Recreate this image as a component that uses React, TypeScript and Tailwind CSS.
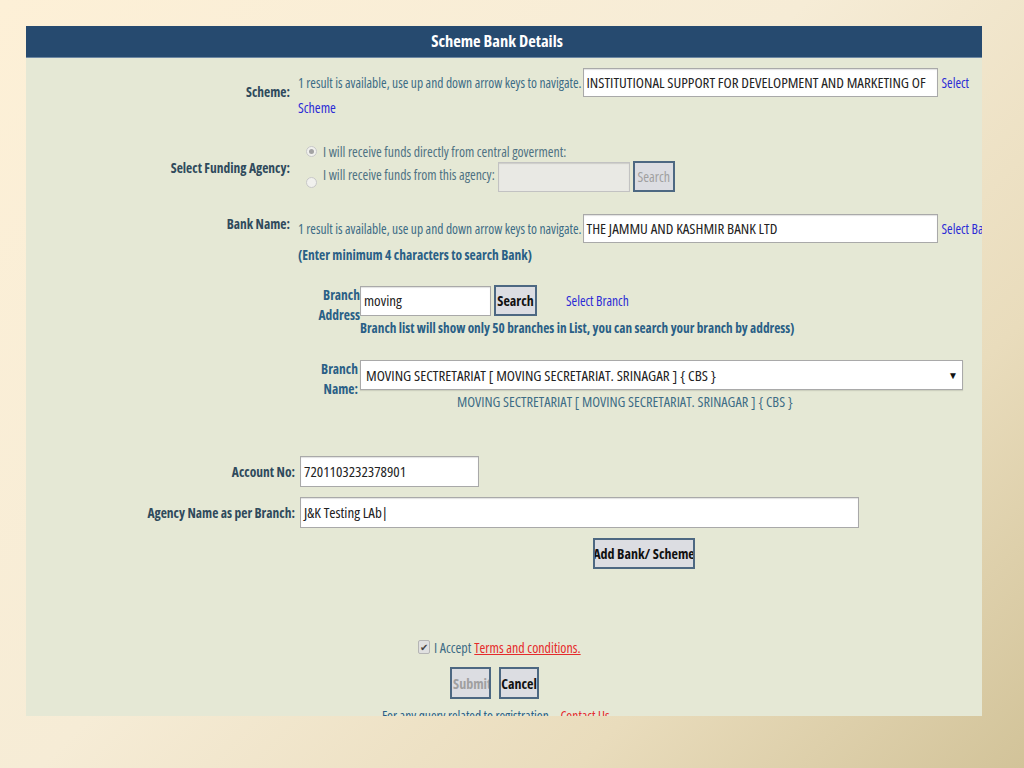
import React from 'react';

const base = "font-['Open_Sans','Liberation_Sans',sans-serif] [font-stretch:75%]";

const Label: React.FC<{ children: React.ReactNode; className?: string }> = ({ children, className }) => (
  <div className={`shrink-0 text-right text-[13.5px] leading-[18px] font-bold text-[#2f4a5c] whitespace-nowrap ${className ?? 'w-[264px]'}`}>{children}</div>
);

const TextBox: React.FC<{ value?: string; className?: string; disabled?: boolean }> = ({ value, className, disabled }) => (
  <div
    className={`h-[29px] shrink-0 border border-[#a9a9a9] shadow-[inset_0_1px_1px_rgba(0,0,0,0.12)] flex items-center px-[3px] text-[15px] text-[#222] whitespace-nowrap overflow-hidden ${
      disabled ? 'bg-[#e9e9e4] border-[#c2c2c2]' : 'bg-white'
    } ${className ?? ''}`}
  >
    {value}
  </div>
);

const Btn: React.FC<{ children: React.ReactNode; className?: string; disabled?: boolean }> = ({ children, className, disabled }) => (
  <div
    className={`shrink-0 flex items-center justify-center whitespace-nowrap overflow-hidden border-2 border-[#4d6882] bg-[#dcdde2] text-[14px] font-bold ${
      disabled ? 'text-[#a0a0a0]' : 'text-[#111]'
    } ${className ?? ''}`}
  >
    {children}
  </div>
);

const Radio: React.FC<{ checked?: boolean }> = ({ checked }) => (
  <span className="w-[11px] h-[11px] rounded-full border border-[#c8c8c8] bg-[#f1f1ee] flex items-center justify-center shrink-0">
    {checked && <span className="w-[5px] h-[5px] rounded-full bg-[#a3a3a3]" />}
  </span>
);

export default function App() {
  return (
    <div className={`w-[1024px] h-[768px] bg-[linear-gradient(135deg,#fdf0d7_0%,#f6ecd6_45%,#e9dcbc_75%,#d2c399_100%)] pt-[26px] pl-[26px] ${base}`}>
      <div className="w-[956px] h-[690px] bg-[#e5e8d5] overflow-hidden">
        {/* Header */}
        <div className="h-[32px] bg-[#264a6f] border-b border-[#6d88a3] flex items-center justify-center text-white font-bold text-[16.5px] pr-[14px]">
          Scheme Bank Details
        </div>

        {/* Scheme */}
        <div className="flex items-center mt-[10px]">
          <Label>Scheme:</Label>
          <div className="ml-[8px] flex flex-col">
            <div className="flex items-center">
              <span className="text-[13.5px] leading-[16px] text-[#3d6c85] whitespace-nowrap">1 result is available, use up and down arrow keys to navigate.</span>
              <TextBox className="w-[355px] ml-[1px] text-[15.4px]" value="INSTITUTIONAL SUPPORT FOR DEVELOPMENT AND MARKETING OF" />
              <span className="ml-[4px] text-[13.5px] leading-[16px] text-[#2b2bd6]">Select</span>
            </div>
            <span className="text-[14px] text-[#2b2bd6] leading-[16px] mt-[3px]">Scheme</span>
          </div>
        </div>

        {/* Funding agency */}
        <div className="flex items-center mt-[28px]">
          <Label>Select Funding Agency:</Label>
          <div className="ml-[16px] flex flex-col">
            <div className="flex items-center h-[15px]">
              <Radio checked />
              <span className="ml-[6px] text-[13.8px] leading-[15px] text-[#4f7283] whitespace-nowrap">I will receive funds directly from central goverment:</span>
            </div>
            <div className="flex items-center mt-[2px]">
              <div className="mt-[12px]">
                <Radio />
              </div>
              <span className="ml-[6px] text-[13.8px] leading-[15px] text-[#4f7283] -mt-[4px] whitespace-nowrap">I will receive funds from this agency:</span>
              <TextBox disabled className="w-[132px] h-[30px] ml-[3px]" />
              <Btn disabled className="w-[42px] h-[31px] ml-[3px] font-normal">Search</Btn>
            </div>
          </div>
        </div>

        {/* Bank name */}
        <div className="flex items-start mt-[22px]">
          <Label className="w-[264px] leading-[20px]">Bank Name:</Label>
          <div className="ml-[8px] flex flex-col">
            <div className="flex items-center">
              <span className="text-[13.5px] leading-[16px] text-[#3d6c85] whitespace-nowrap">1 result is available, use up and down arrow keys to navigate.</span>
              <TextBox className="w-[355px] ml-[1px]" value="THE JAMMU AND KASHMIR BANK LTD" />
              <span className="ml-[4px] text-[13.5px] leading-[16px] text-[#2b2bd6] whitespace-nowrap">Select Ba</span>
            </div>
            <span className="text-[13.5px] leading-[16px] font-bold text-[#2a5f86] mt-[4px] whitespace-nowrap">(Enter minimum 4 characters to search Bank)</span>
          </div>
        </div>

        {/* Branch address */}
        <div className="ml-[292px] mt-[22px]">
          <div className="flex items-start">
            <div className="w-[42px] shrink-0 text-right text-[13.5px] font-bold text-[#2a5f86] leading-[20px]">
              <div>Branch</div>
              <div className="whitespace-nowrap">Address</div>
            </div>
            <div className="flex flex-col">
              <div className="flex items-center">
                <TextBox className="w-[131px] h-[30px] text-[13px]" value="moving" />
                <Btn className="w-[43px] h-[31px] ml-[3px]">Search</Btn>
                <span className="ml-[29px] text-[13.5px] leading-[16px] text-[#2b2bd6] whitespace-nowrap">Select Branch</span>
              </div>
              <span className="text-[13.3px] leading-[16px] font-bold text-[#2a5f86] mt-[4px] whitespace-nowrap">
                Branch list will show only 50 branches in List, you can search your branch by address)
              </span>
            </div>
          </div>

          {/* Branch name */}
          <div className="flex items-start mt-[24px]">
            <div className="w-[42px] shrink-0 text-right text-[13.5px] font-bold text-[#2a5f86] leading-[20px] pr-[2px] -mt-[1px]">
              <div>Branch</div>
              <div>Name:</div>
            </div>
            <div className="flex flex-col">
              <div className="w-[603px] h-[30px] bg-white border border-[#a9a9a9] shadow-[0_1px_1px_rgba(0,0,0,0.1)] flex items-center justify-between pl-[5px] pr-[4px] text-[15px] text-[#222]">
                <span className="whitespace-nowrap">MOVING SECTRETARIAT [ MOVING SECRETARIAT. SRINAGAR ] {'{'} CBS {'}'}</span>
                <span className="text-[10px] text-[#111] font-['Liberation_Sans',sans-serif]">▼</span>
              </div>
              <span className="ml-[97px] text-[14.4px] leading-[16px] text-[#3d6c85] mt-[4px] whitespace-nowrap">
                MOVING SECTRETARIAT [ MOVING SECRETARIAT. SRINAGAR ] {'{'} CBS {'}'}
              </span>
            </div>
          </div>
        </div>

        {/* Account no */}
        <div className="flex items-center mt-[46px]">
          <Label className="w-[269px]">Account No:</Label>
          <TextBox className="w-[179px] h-[31px] ml-[5px] text-[14.5px]" value="7201103232378901" />
        </div>

        {/* Agency name */}
        <div className="flex items-center mt-[10px]">
          <Label className="w-[269px]">Agency Name as per Branch:</Label>
          <TextBox className="w-[559px] h-[31px] ml-[5px]" value="J&K Testing LAb|" />
        </div>

        <div className="flex mt-[10px] ml-[567px]">
          <Btn className="w-[102px] h-[31px] text-[13.3px]">Add Bank/ Scheme</Btn>
        </div>

        {/* Accept */}
        <div className="flex items-center h-[16px] mt-[70px] ml-[392px]">
          <span className="w-[12px] h-[14px] rounded-[2px] border border-[#b5b5b5] bg-[#e0e0e0] flex items-center justify-center text-[10px] text-[#444] leading-none">✔</span>
          <span className="ml-[4px] text-[14px] text-[#3d6c85]">I Accept</span>
          <span className="ml-[3px] text-[14px] text-[#e52b2b] underline decoration-[#e52b2b]">Terms and conditions.</span>
        </div>

        <div className="flex mt-[12px] ml-[424px] gap-[8px]">
          <Btn disabled className="w-[41px] h-[32px] text-[14.5px] justify-start pl-[1px]">Submit</Btn>
          <Btn className="w-[40px] h-[32px] text-[14.5px]">Cancel</Btn>
        </div>

        <div className="mt-[9px] ml-[356px] text-[13.5px] leading-[16px] text-[#2a5f86] whitespace-nowrap">
          For any query related to registration, <span className="ml-[6px] text-[#e52b2b]">Contact Us</span>
        </div>
      </div>
    </div>
  );
}
